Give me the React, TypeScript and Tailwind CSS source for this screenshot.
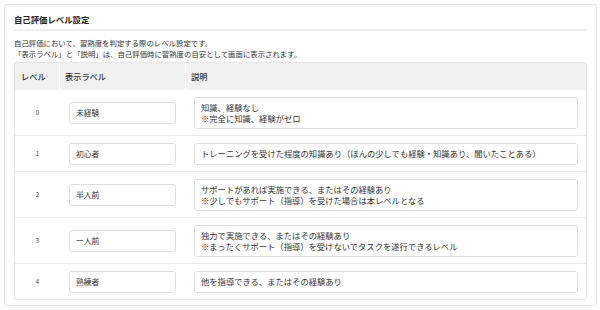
import React from 'react'

// ============================================================================
// Data
// ============================================================================

interface LevelRow {
  level: number
  label: string
  description: string[]
}

const LEVELS: LevelRow[] = [
  { level: 0, label: '未経験', description: ['知識、経験なし', '※完全に知識、経験がゼロ'] },
  {
    level: 1,
    label: '初心者',
    description: ['トレーニングを受けた程度の知識あり（ほんの少しでも経験・知識あり、聞いたことある）'],
  },
  {
    level: 2,
    label: '半人前',
    description: ['サポートがあれば実施できる、またはその経験あり', '※少しでもサポート（指導）を受けた場合は本レベルとなる'],
  },
  {
    level: 3,
    label: '一人前',
    description: ['独力で実施できる、またはその経験あり', '※まったくサポート（指導）を受けないでタスクを遂行できるレベル'],
  },
  { level: 4, label: '熟練者', description: ['他を指導できる、またはその経験あり'] },
]

// ============================================================================
// Row
// ============================================================================

function LevelTableRow({ row, last }: { row: LevelRow; last: boolean }) {
  return (
    <div
      className={`grid grid-cols-[45px_126px_1fr] items-center ${last ? '' : 'border-b border-[#e9e9e9]'}`}
    >
      <div className="text-center text-[6px] text-[#444]">{row.level}</div>
      <div className="py-[6.5px] pl-[9px] pr-[10px]">
        <div className="h-[22px] rounded-[3px] border border-[#dedede] bg-white px-[6px] text-[7.8px] leading-[20px] text-[#333]">
          {row.label}
        </div>
      </div>
      <div className="py-[6.5px] pl-[8px] pr-[8px]">
        <div className="flex min-h-[22px] flex-col justify-center rounded-[3px] border border-[#dedede] bg-white px-[6px] py-[4px] text-[8.3px] leading-[11px] text-[#333]">
          {row.description.map((line) => (
            <div key={line}>{line}</div>
          ))}
        </div>
      </div>
    </div>
  )
}

// ============================================================================
// App
// ============================================================================

export default function App() {
  return (
    <div className="h-[310px] w-[600px] bg-white pl-[4px] pr-[3px] pt-[4px] font-['Noto_Sans_CJK_JP','Noto_Sans',sans-serif] text-[#333]">
      <div className="h-[302px] rounded-[3px] border border-[#e4e4e4] px-[9px] pt-[8px] shadow-[0_0_2px_rgba(0,0,0,0.04)]">
        <h2 className="text-[8.4px] font-bold leading-[12px] text-[#222]">自己評価レベル設定</h2>
        <div className="mt-[4px] border-b-2 border-[#efefef]" />

        <p className="mt-[7px] text-[7.4px] leading-[10.5px] text-[#333]">
          自己評価において、習熟度を判定する際のレベル設定です。
          <br />
          「表示ラベル」と「説明」は、自己評価時に習熟度の目安として画面に表示されます。
        </p>

        <div className="mt-[3px] overflow-hidden rounded-[3px] border border-[#e4e4e4]">
          <div className="grid h-[27px] grid-cols-[45px_126px_1fr] items-center bg-[#f1f1f1] text-[8.2px] font-medium text-[#333]">
            <div className="flex h-full items-center border-r border-white pl-[6px]">レベル</div>
            <div className="flex h-full items-center border-r border-white pl-[5px]">表示ラベル</div>
            <div className="flex h-full items-center pl-[5px]">説明</div>
          </div>
          {LEVELS.map((row, i) => (
            <LevelTableRow key={row.level} row={row} last={i === LEVELS.length - 1} />
          ))}
        </div>
      </div>
    </div>
  )
}
